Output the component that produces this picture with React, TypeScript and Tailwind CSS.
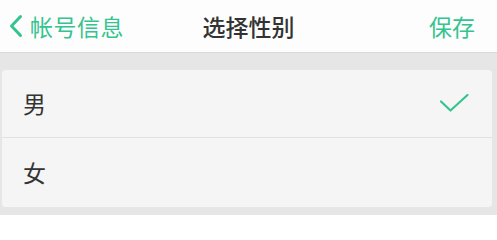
import React from "react";

export default function App() {
  const font = { fontFamily: '"Noto Sans CJK SC", "Noto Sans", sans-serif' };
  return (
    <div className="w-[497px] h-[215px] bg-[#e6e6e6] overflow-hidden" style={font}>
      <div className="h-[53px] bg-[#fdfdfd] border-b border-[#dadada] flex items-center justify-between relative">
        <div className="flex items-center pl-[9px] text-[#34c48f]">
          <svg width="14" height="24" viewBox="0 0 14 24" className="mr-[7px]">
            <path d="M11.5 2.5 L2.5 12 L11.5 21.5" fill="none" stroke="#34c48f" strokeWidth="3" strokeLinecap="round" strokeLinejoin="round" />
          </svg>
          <span className="text-[23px] leading-none tracking-[0.5px]">帐号信息</span>
        </div>
        <span className="absolute left-1/2 -translate-x-1/2 text-[23px] leading-none font-medium text-[#333333]">选择性别</span>
        <span className="pr-[22px] text-[23px] leading-none text-[#34c48f]">保存</span>
      </div>
      <div className="mt-[17px] ml-[2px] w-[490px] h-[137px] bg-[#f5f5f5] rounded-[4px] flex flex-col">
        <div className="h-[68px] flex items-center justify-between pl-[21px] border-b border-[#e1e1e1]">
          <span className="text-[23px] leading-none text-[#333333]">男</span>
          <svg width="30" height="20" viewBox="0 0 30 20" className="mr-[22px]">
            <path d="M1 7.5 L10.5 16.5 L27.5 1" fill="none" stroke="#34c48f" strokeWidth="2.2" strokeLinecap="round" strokeLinejoin="round" />
          </svg>
        </div>
        <div className="flex-1 flex items-center pl-[21px]">
          <span className="text-[23px] leading-none text-[#333333]">女</span>
        </div>
      </div>
    </div>
  );
}
